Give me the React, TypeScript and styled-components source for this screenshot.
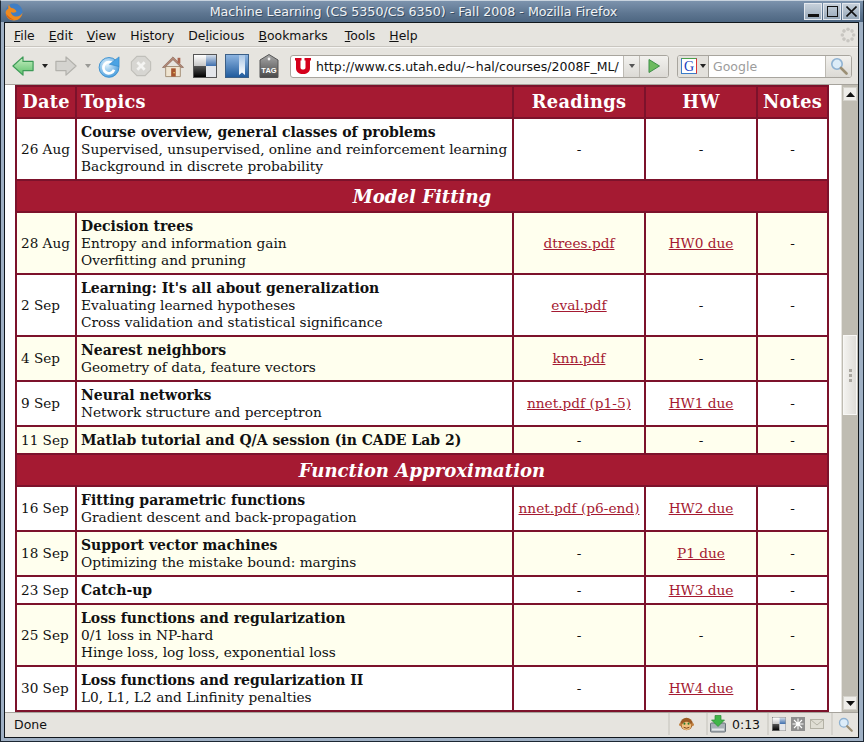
import styled, { createGlobalStyle } from 'styled-components';

const GlobalStyle = createGlobalStyle`
  html, body {
    margin: 0;
    padding: 0;
    width: 864px;
    height: 742px;
    overflow: hidden;
    background: #e6e4df;
  }
`;

const Win = styled.div`
  width: 864px;
  height: 742px;
  box-sizing: border-box;
  display: flex;
  flex-direction: column;
  background: #9fb0c4;
  border: 1px solid #1c2733;
  border-top-color: #c8d3de;
  font-family: "DejaVu Sans", sans-serif;
  color: #111;
`;

const TitleBar = styled.div`
  height: 21px;
  flex: none;
  display: flex;
  align-items: center;
  padding: 0 3px 0 4px;
  background: linear-gradient(#7c93ad, #5d7590 60%, #4d6681);
`;

const TitleText = styled.div`
  flex: 1;
  text-align: center;
  color: #f0f3f6;
  font-size: 12.65px;
  text-shadow: 1px 1px 0 #3a4e63;
  white-space: nowrap;
`;

const WinButtons = styled.div`
  display: flex;
  gap: 1px;
`;

const WinButton = styled.div`
  width: 18px;
  height: 17px;
  box-sizing: border-box;
  background: linear-gradient(#c6d0da, #98a9ba);
  border: 1px solid #e3e8ee;
  display: flex;
  align-items: center;
  justify-content: center;
`;

const Inner = styled.div`
  flex: 1;
  min-height: 0;
  margin: 0 4px 3px 3px;
  border: 1px solid #10161c;
  display: flex;
  flex-direction: column;
  background: #e6e4df;
`;

const MenuBar = styled.div`
  height: 24px;
  flex: none;
  display: flex;
  align-items: center;
  padding: 1px 2px 0 9px;
  gap: 14px;
  font-size: 12.4px;
  border-bottom: 1px solid #c9c6c0;
  box-sizing: border-box;
`;

const MenuItem = styled.span`
  white-space: nowrap;
  &:nth-child(6) {
    margin-right: 3px;
  }
  &:nth-child(8) {
    margin-right: auto;
  }
`;

const Key = styled.span`
  text-decoration: underline;
`;

const NavBar = styled.div`
  height: 38px;
  flex: none;
  box-sizing: border-box;
  display: flex;
  align-items: center;
  padding: 0 7px;
  border-top: 1px solid #f6f5f3;
  border-bottom: 1px solid #a6a39c;
`;

const NavIcon = styled.div<{ $gap?: number }>`
  flex: none;
  display: flex;
  align-items: center;
  margin-right: ${({ $gap }) => $gap ?? 0}px;
`;

const UrlBox = styled.div`
  width: 379px;
  height: 23px;
  flex: none;
  box-sizing: border-box;
  margin-left: 11px;
  display: flex;
  align-items: center;
  background: #fff;
  border: 1px solid #a8a59e;
  border-radius: 3px;
  overflow: hidden;
`;

const UtahMark = styled.div`
  flex: none;
  display: flex;
  margin-left: 4px;
`;

const UrlText = styled.div`
  flex: 1;
  font-size: 12.5px;
  padding-left: 5px;
  white-space: nowrap;
`;

const FieldButton = styled.div<{ $w: number }>`
  width: ${({ $w }) => $w}px;
  height: 100%;
  flex: none;
  display: flex;
  align-items: center;
  justify-content: center;
  background: linear-gradient(#f2f1ee, #dcdad5);
  border-left: 1px solid #bdbab3;
`;

const SearchBox = styled.div`
  width: 175px;
  height: 23px;
  flex: none;
  box-sizing: border-box;
  margin-left: 8px;
  display: flex;
  align-items: center;
  background: #fff;
  border: 1px solid #a8a59e;
  border-radius: 3px;
  overflow: hidden;
`;

const EnginePicker = styled.div`
  width: 31px;
  height: 100%;
  flex: none;
  display: flex;
  align-items: center;
  gap: 3px;
  padding-left: 3px;
  box-sizing: border-box;
  background: #e3e1dc;
  border-right: 1px solid #a8a59e;
`;

const SearchText = styled.div`
  flex: 1;
  font-size: 12.5px;
  color: #9c9c9c;
  padding-left: 4px;
`;

const Content = styled.div`
  flex: 1;
  min-height: 0;
  display: flex;
  background: #fff;
`;

const Page = styled.div`
  flex: 1;
  min-width: 0;
  overflow: hidden;
  padding-left: 10px;
`;

const Schedule = styled.table`
  width: 812px;
  table-layout: fixed;
  border-collapse: collapse;
  font-family: "DejaVu Serif", serif;
  font-size: 13.7px;
  line-height: 17px;
  color: #111;
  th, td {
    border: 2px solid #7c122b;
  }
`;

const HeadCell = styled.th`
  height: 28px;
  padding: 0 4px 2px;
  background: #a51a32;
  color: #fff;
  font-size: 17.8px;
  font-weight: bold;
  text-align: center;
  letter-spacing: 0.3px;
  white-space: nowrap;
  &:nth-child(2) {
    text-align: left;
  }
`;

const SectionCell = styled.td`
  height: 30px;
  padding: 0;
  background: #a51a32;
  color: #fff;
  font-size: 18.1px;
  font-weight: bold;
  font-style: italic;
  text-align: center;
`;

const Row = styled.tr<{ $cream: boolean }>`
  background: ${({ $cream }) => ($cream ? '#ffffee' : '#fff')};
`;

const Cell = styled.td<{ $center?: boolean }>`
  padding: 4.5px 4px;
  text-align: ${({ $center }) => ($center ? 'center' : 'left')};
  white-space: nowrap;
`;

const DateCell = styled(Cell)`
  font-size: 13.6px;
`;

const TopicTitle = styled.div`
  font-size: 14px;
  font-weight: bold;
`;

const DocLink = styled.a`
  color: #a51a32;
  text-decoration: underline;
`;

const Scrollbar = styled.div`
  width: 17px;
  flex: none;
  display: flex;
  flex-direction: column;
  background: #bfbcb2;
  border-left: 1px solid #e6e4df;
  box-sizing: border-box;
`;

const ScrollArrow = styled.div`
  height: 14px;
  flex: none;
  box-sizing: border-box;
  margin: 2px 1px;
  background: #eeede9;
  border: 1px solid #d4d2cb;
  display: flex;
  align-items: center;
  justify-content: center;
`;

const ScrollTrack = styled.div`
  flex: 1;
  display: flex;
  flex-direction: column;
  padding-top: 232px;
`;

const ScrollThumb = styled.div`
  height: 80px;
  box-sizing: border-box;
  margin: 0 1px;
  background: linear-gradient(90deg, #f3f2ef, #dfddd8);
  border: 1px solid #f8f7f5;
  display: flex;
  flex-direction: column;
  align-items: center;
  justify-content: center;
  gap: 2px;
`;

const Grip = styled.span`
  width: 3px;
  height: 3px;
  background: #a9a69f;
`;

const StatusBar = styled.div`
  height: 25px;
  flex: none;
  box-sizing: border-box;
  display: flex;
  align-items: center;
  padding-bottom: 2px;
  font-size: 12.5px;
  border-top: 1px solid #a6a39c;
`;

const StatusText = styled.div`
  flex: 1;
  padding-left: 9px;
`;

const StatusPane = styled.div<{ $w: number; $pad: number; $gap?: number }>`
  width: ${({ $w }) => $w}px;
  height: 22px;
  flex: none;
  box-sizing: border-box;
  display: flex;
  align-items: center;
  gap: ${({ $gap }) => $gap ?? 0}px;
  padding-left: ${({ $pad }) => $pad}px;
  border-left: 2px solid #d5d3cd;
`;

const BackIcon = () => (
  <svg width="22" height="22" viewBox="0 0 24 24">
    <defs>
      <linearGradient id="bk" x1="0" y1="0" x2="0" y2="1">
        <stop offset="0" stopColor="#c9f0c4" />
        <stop offset="1" stopColor="#5cc06a" />
      </linearGradient>
    </defs>
    <path d="M1 12 L12 2 V7 H23 V17 H12 V22 Z" fill="url(#bk)" stroke="#3d9a57" strokeWidth="1.3" strokeLinejoin="round" />
  </svg>
);

const ForwardIcon = () => (
  <svg width="22" height="22" viewBox="0 0 24 24">
    <path d="M23 12 L12 2 V7 H1 V17 H12 V22 Z" fill="#d4d3cf" stroke="#b2b1ac" strokeWidth="1.3" strokeLinejoin="round" />
  </svg>
);

const Caret = ({ color = '#222' }: { color?: string }) => (
  <svg width="6" height="4" viewBox="0 0 6 4">
    <path d="M0 0 H6 L3 4 Z" fill={color} />
  </svg>
);

const ReloadIcon = () => (
  <svg width="22" height="23" viewBox="0 0 24 25">
    <defs>
      <radialGradient id="rl" cx="0.4" cy="0.35" r="0.8">
        <stop offset="0" stopColor="#e4f3fc" />
        <stop offset="1" stopColor="#2f8fd8" />
      </radialGradient>
    </defs>
    <circle cx="12" cy="13.5" r="10.8" fill="url(#rl)" stroke="#3a8fcf" />
    <path d="M16.5 10 A6 6 0 1 0 17.5 16" fill="none" stroke="#fff" strokeWidth="3" />
    <path d="M12.5 10 L23 2 V12.5 Z" fill="#4aa3e4" stroke="#2f86c8" strokeWidth="0.7" />
  </svg>
);

const StopIcon = () => (
  <svg width="22" height="22" viewBox="0 0 24 24">
    <path d="M7.5 1.5 H16.5 L22.5 7.5 V16.5 L16.5 22.5 H7.5 L1.5 16.5 V7.5 Z" fill="#d7d6d2" stroke="#c0bfba" strokeWidth="1.2" />
    <path d="M8 8 L16 16 M16 8 L8 16" stroke="#f4f4f2" strokeWidth="3" />
  </svg>
);

const HomeIcon = () => (
  <svg width="22" height="23" viewBox="0 0 24 24">
    <path d="M4 12 V23 H20 V12 Z" fill="#efe4d0" stroke="#a08a72" />
    <path d="M0.5 13 L12 1.5 L23.5 13 L21 13 L12 4.5 L3 13 Z" fill="#b48978" stroke="#8a6a5a" strokeWidth="0.8" />
    <rect x="17" y="2.5" width="3" height="6" fill="#a9644f" />
    <rect x="10" y="14" width="5" height="9" fill="#a5552f" />
    <rect x="12.5" y="18" width="1.4" height="1.4" fill="#f3d36b" />
  </svg>
);

const OverviewIcon = ({ size = 24 }: { size?: number }) => (
  <svg width={size} height={size} viewBox="0 0 24 24">
    <defs>
      <linearGradient id="ov1" x1="0" y1="0" x2="0" y2="1">
        <stop offset="0" stopColor="#fff" />
        <stop offset="1" stopColor="#c5c5c5" />
      </linearGradient>
      <linearGradient id="ov2" x1="0" y1="0" x2="0" y2="1">
        <stop offset="0" stopColor="#555" />
        <stop offset="1" stopColor="#000" />
      </linearGradient>
      <linearGradient id="ov3" x1="0" y1="0" x2="0" y2="1">
        <stop offset="0" stopColor="#d4dde8" />
        <stop offset="1" stopColor="#3f6fae" />
      </linearGradient>
    </defs>
    <rect x="0.5" y="0.5" width="23" height="23" fill="#fff" stroke="#555" />
    <rect x="1" y="1" width="12" height="11" fill="url(#ov1)" />
    <rect x="13" y="1" width="10" height="11" fill="url(#ov3)" />
    <rect x="1" y="12" width="12" height="11" fill="url(#ov2)" />
    <rect x="13" y="12" width="10" height="11" fill="#e4e6ea" />
  </svg>
);

const BookIcon = () => (
  <svg width="24" height="24" viewBox="0 0 24 24">
    <defs>
      <linearGradient id="bkm" x1="0" y1="0" x2="0" y2="1">
        <stop offset="0" stopColor="#8fb6e2" />
        <stop offset="1" stopColor="#1f5a9c" />
      </linearGradient>
      <linearGradient id="bkw" x1="0" y1="0" x2="0" y2="1">
        <stop offset="0" stopColor="#a9c6e6" />
        <stop offset="1" stopColor="#ffffff" />
      </linearGradient>
    </defs>
    <rect x="0.5" y="0.5" width="23" height="23" fill="url(#bkm)" stroke="#3b5f87" />
    <path d="M14 1 H20 V21 L17 18.5 L14 21 Z" fill="url(#bkw)" />
  </svg>
);

const TagIcon = () => (
  <svg width="20" height="24" viewBox="0 0 20 24">
    <defs>
      <linearGradient id="tg" x1="0" y1="0" x2="0" y2="1">
        <stop offset="0" stopColor="#a8a8a8" />
        <stop offset="1" stopColor="#4a4a4a" />
      </linearGradient>
    </defs>
    <path d="M1 6 L10 0.5 L19 6 V23.5 H1 Z" fill="url(#tg)" stroke="#555" />
    <circle cx="10" cy="5" r="1.4" fill="#eee" />
    <text x="10" y="18.5" textAnchor="middle" fontFamily="Liberation Sans, sans-serif" fontSize="7.5" fontWeight="bold" fill="#fff">TAG</text>
  </svg>
);

const UtahLogo = () => (
  <svg width="16" height="16" viewBox="0 0 16 16">
    <path d="M0 0 H6.5 V2.5 H5.5 V9.5 C5.5 11 6.5 11.5 8 11.5 C9.5 11.5 10.5 11 10.5 9.5 V2.5 H9.5 V0 H16 V2.5 H15 V10 C15 14 12 16 8 16 C4 16 1 14 1 10 V2.5 H0 Z" fill="#d5001c" />
  </svg>
);

const GoIcon = () => (
  <svg width="14" height="16" viewBox="0 0 14 16">
    <path d="M2 1.5 L12.5 8 L2 14.5 Z" fill="#6dbb5f" stroke="#3f8f49" />
  </svg>
);

const GoogleMark = () => (
  <svg width="16" height="16" viewBox="0 0 16 16">
    <rect x="0.5" y="0.5" width="15" height="15" fill="#fff" stroke="#3a7bc8" />
    <path d="M0.5 0.5 H15.5" stroke="#4aa04a" />
    <path d="M15.5 0.5 V15.5" stroke="#d33" />
    <text x="8" y="13" textAnchor="middle" fontFamily="Liberation Serif, serif" fontSize="14" fill="#2040c0">G</text>
  </svg>
);

const Magnifier = ({ size = 18 }: { size?: number }) => (
  <svg width={size} height={size} viewBox="0 0 18 18">
    <circle cx="7" cy="7" r="5.2" fill="#dcecf8" stroke="#8fb2d2" strokeWidth="1.6" />
    <path d="M11 11 L16.5 16.5" stroke="#9b8f75" strokeWidth="2.6" strokeLinecap="round" />
  </svg>
);

const FoxLogo = () => (
  <svg width="18" height="18" viewBox="0 0 18 18">
    <circle cx="9" cy="9" r="8.5" fill="#3f7ec4" />
    <path d="M4 1.5 C3 3.5 3 4.5 3.5 5.5 C2 6.5 1 7.5 0.6 9 C0.6 14 4.5 17.5 9 17.5 C13.5 17.5 17.2 14 17.5 9.5 C16.5 12 14 13.5 11.5 13.5 C8.5 13.5 6 11.5 6 9 C7.5 10 10 10 11.5 8.5 C10.5 6.5 8.5 5 6.5 5 C5.5 4.5 4.5 3 4 1.5 Z" fill="#ee8a1f" />
    <path d="M1 11 C2 14.5 5 16.8 9 17 C6 15.5 3.5 13.5 1 11 Z" fill="#d55f12" />
  </svg>
);

const Throbber = () => (
  <svg width="16" height="16" viewBox="0 0 18 18">
    {[0, 45, 90, 135, 180, 225, 270, 315].map((a) => (
      <circle key={a} cx="9" cy="2.6" r="2" fill="#c8c6c1" transform={`rotate(${a} 9 9)`} />
    ))}
  </svg>
);

const MonkeyIcon = () => (
  <svg width="15" height="16" viewBox="0 0 16 16">
    <circle cx="8" cy="8" r="6.6" fill="#9b5a22" />
    <circle cx="1.6" cy="8.5" r="1.6" fill="#c08040" />
    <circle cx="14.4" cy="8.5" r="1.6" fill="#c08040" />
    <ellipse cx="8" cy="10" rx="5" ry="4.4" fill="#eec07e" />
    <circle cx="5.8" cy="7.6" r="1.1" fill="#2f7a2f" />
    <circle cx="10.2" cy="7.6" r="1.1" fill="#2f7a2f" />
    <path d="M5 11.5 Q8 13.5 11 11.5" stroke="#7a3c12" fill="none" />
  </svg>
);

const DownloadIcon = () => (
  <svg width="16" height="18" viewBox="0 0 16 18">
    <rect x="0.5" y="8" width="15" height="9" rx="1" fill="#a9b1b7" stroke="#69737b" />
    <rect x="2" y="13.5" width="12" height="2" fill="#e6e9eb" />
    <path d="M5 0.5 H11 V5 H14.5 L8 11.5 L1.5 5 H5 Z" fill="#41b649" stroke="#2b8a34" strokeWidth="0.7" />
  </svg>
);

const SnowIcon = () => (
  <svg width="14" height="14" viewBox="0 0 14 14">
    <rect width="14" height="14" fill="#8f8f8f" />
    <path d="M7 1.5 V12.5 M1.5 7 H12.5 M3 3 L11 11 M11 3 L3 11" stroke="#fff" strokeWidth="1.1" />
    <circle cx="7" cy="7" r="1.8" fill="#fff" />
  </svg>
);

const MailIcon = () => (
  <svg width="14" height="10" viewBox="0 0 14 10">
    <rect x="0.5" y="0.5" width="13" height="9" fill="#e0ded4" stroke="#b3b1a5" />
    <path d="M0.5 0.5 L7 6 L13.5 0.5" fill="none" stroke="#b3b1a5" />
  </svg>
);

type Lecture = {
  date: string;
  title: string;
  lines?: string[];
  read?: string;
  hw?: string;
};
type Entry = Lecture | { section: string };

const schedule: Entry[] = [
  { date: '26 Aug', title: 'Course overview, general classes of problems', lines: ['Supervised, unsupervised, online and reinforcement learning', 'Background in discrete probability'] },
  { section: 'Model Fitting' },
  { date: '28 Aug', title: 'Decision trees', lines: ['Entropy and information gain', 'Overfitting and pruning'], read: 'dtrees.pdf', hw: 'HW0 due' },
  { date: '2 Sep', title: "Learning: It's all about generalization", lines: ['Evaluating learned hypotheses', 'Cross validation and statistical significance'], read: 'eval.pdf' },
  { date: '4 Sep', title: 'Nearest neighbors', lines: ['Geometry of data, feature vectors'], read: 'knn.pdf' },
  { date: '9 Sep', title: 'Neural networks', lines: ['Network structure and perceptron'], read: 'nnet.pdf (p1-5)', hw: 'HW1 due' },
  { date: '11 Sep', title: 'Matlab tutorial and Q/A session (in CADE Lab 2)' },
  { section: 'Function Approximation' },
  { date: '16 Sep', title: 'Fitting parametric functions', lines: ['Gradient descent and back-propagation'], read: 'nnet.pdf (p6-end)', hw: 'HW2 due' },
  { date: '18 Sep', title: 'Support vector machines', lines: ['Optimizing the mistake bound: margins'], hw: 'P1 due' },
  { date: '23 Sep', title: 'Catch-up', hw: 'HW3 due' },
  { date: '25 Sep', title: 'Loss functions and regularization', lines: ['0/1 loss in NP-hard', 'Hinge loss, log loss, exponential loss'] },
  { date: '30 Sep', title: 'Loss functions and regularization II', lines: ['L0, L1, L2 and Linfinity penalties'], hw: 'HW4 due' },
];

const menus: [string, string, string][] = [
  ['', 'F', 'ile'],
  ['', 'E', 'dit'],
  ['', 'V', 'iew'],
  ['Hi', 's', 'tory'],
  ['De', 'l', 'icious'],
  ['', 'B', 'ookmarks'],
  ['', 'T', 'ools'],
  ['', 'H', 'elp'],
];

const Maybe = ({ text }: { text?: string }) => (text ? <DocLink>{text}</DocLink> : <>-</>);

const ScheduleRows = () => {
  let cream = false;
  return (
    <tbody>
      {schedule.map((entry) => {
        if ('section' in entry) {
          return (
            <tr key={entry.section}>
              <SectionCell colSpan={5}>{entry.section}</SectionCell>
            </tr>
          );
        }
        const row = (
          <Row key={entry.date} $cream={cream}>
            <DateCell>{entry.date}</DateCell>
            <Cell>
              <TopicTitle>{entry.title}</TopicTitle>
              {entry.lines?.map((line) => <div key={line}>{line}</div>)}
            </Cell>
            <Cell $center><Maybe text={entry.read} /></Cell>
            <Cell $center><Maybe text={entry.hw} /></Cell>
            <Cell $center>-</Cell>
          </Row>
        );
        cream = !cream;
        return row;
      })}
    </tbody>
  );
};

export default function App() {
  return (
    <>
      <GlobalStyle />
      <Win>
        <TitleBar>
          <FoxLogo />
          <TitleText>Machine Learning (CS 5350/CS 6350) - Fall 2008 - Mozilla Firefox</TitleText>
          <WinButtons>
            <WinButton>
              <svg width="11" height="11" viewBox="0 0 11 11"><rect x="0" y="8" width="11" height="3" fill="#111" /></svg>
            </WinButton>
            <WinButton>
              <svg width="11" height="11" viewBox="0 0 11 11"><rect x="0.5" y="0.5" width="10" height="10" fill="none" stroke="#111" /></svg>
            </WinButton>
            <WinButton>
              <svg width="11" height="11" viewBox="0 0 11 11"><path d="M0.5 0.5 L10.5 10.5 M10.5 0.5 L0.5 10.5" stroke="#111" strokeWidth="1.6" /></svg>
            </WinButton>
          </WinButtons>
        </TitleBar>
        <Inner>
          <MenuBar>
            {menus.map(([pre, key, post]) => (
              <MenuItem key={key + post}>
                {pre}<Key>{key}</Key>{post}
              </MenuItem>
            ))}
            <Throbber />
          </MenuBar>
          <NavBar>
            <NavIcon $gap={8}><BackIcon /></NavIcon>
            <NavIcon $gap={7}><Caret /></NavIcon>
            <NavIcon $gap={8}><ForwardIcon /></NavIcon>
            <NavIcon $gap={7}><Caret color="#9a9a96" /></NavIcon>
            <NavIcon $gap={10}><ReloadIcon /></NavIcon>
            <NavIcon $gap={10}><StopIcon /></NavIcon>
            <NavIcon $gap={9}><HomeIcon /></NavIcon>
            <NavIcon $gap={8}><OverviewIcon /></NavIcon>
            <NavIcon $gap={10}><BookIcon /></NavIcon>
            <NavIcon><TagIcon /></NavIcon>
            <UrlBox>
              <UtahMark><UtahLogo /></UtahMark>
              <UrlText>http://www.cs.utah.edu/~hal/courses/2008F_ML/</UrlText>
              <FieldButton $w={15}><Caret color="#555" /></FieldButton>
              <FieldButton $w={28}><GoIcon /></FieldButton>
            </UrlBox>
            <SearchBox>
              <EnginePicker><GoogleMark /><Caret /></EnginePicker>
              <SearchText>Google</SearchText>
              <FieldButton $w={25}><Magnifier /></FieldButton>
            </SearchBox>
          </NavBar>
          <Content>
            <Page>
              <Schedule>
                <colgroup>
                  <col width="60" />
                  <col width="437" />
                  <col width="132" />
                  <col width="112" />
                  <col width="71" />
                </colgroup>
                <thead>
                  <tr>
                    <HeadCell>Date</HeadCell>
                    <HeadCell>Topics</HeadCell>
                    <HeadCell>Readings</HeadCell>
                    <HeadCell>HW</HeadCell>
                    <HeadCell>Notes</HeadCell>
                  </tr>
                </thead>
                <ScheduleRows />
              </Schedule>
            </Page>
            <Scrollbar>
              <ScrollArrow>
                <svg width="9" height="5" viewBox="0 0 9 5"><path d="M0 5 H9 L4.5 0 Z" fill="#111" /></svg>
              </ScrollArrow>
              <ScrollTrack>
                <ScrollThumb>
                  <Grip />
                  <Grip />
                  <Grip />
                </ScrollThumb>
              </ScrollTrack>
              <ScrollArrow>
                <svg width="9" height="5" viewBox="0 0 9 5"><path d="M0 0 H9 L4.5 5 Z" fill="#111" /></svg>
              </ScrollArrow>
            </Scrollbar>
          </Content>
          <StatusBar>
            <StatusText>Done</StatusText>
            <StatusPane $w={38} $pad={9}><MonkeyIcon /></StatusPane>
            <StatusPane $w={61} $pad={2} $gap={6}><DownloadIcon />0:13</StatusPane>
            <StatusPane $w={64} $pad={3} $gap={5}><OverviewIcon size={14} /><SnowIcon /><MailIcon /></StatusPane>
            <StatusPane $w={27} $pad={5}><Magnifier size={15} /></StatusPane>
          </StatusBar>
        </Inner>
      </Win>
    </>
  );
}
